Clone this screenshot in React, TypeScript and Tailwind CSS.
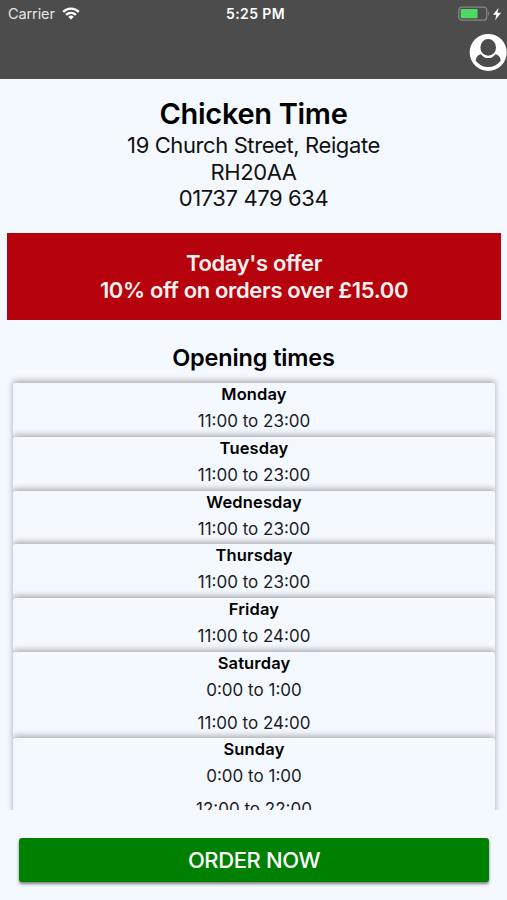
import clsx from "clsx";

type OpeningDay = {
  day: string;
  hours: string[];
};

const OPENING_TIMES: OpeningDay[] = [
  { day: "Monday", hours: ["11:00 to 23:00"] },
  { day: "Tuesday", hours: ["11:00 to 23:00"] },
  { day: "Wednesday", hours: ["11:00 to 23:00"] },
  { day: "Thursday", hours: ["11:00 to 23:00"] },
  { day: "Friday", hours: ["11:00 to 24:00"] },
  { day: "Saturday", hours: ["0:00 to 1:00", "11:00 to 24:00"] },
  { day: "Sunday", hours: ["0:00 to 1:00", "12:00 to 22:00"] },
];

function WifiIcon() {
  return (
    <svg viewBox="0 0 18 13" className="w-[18px] h-[13px]" fill="none" stroke="#fff" strokeWidth="2.4">
      <path d="M1.2 4.9a11 11 0 0 1 15.6 0" />
      <path d="M4.1 7.9a7 7 0 0 1 9.8 0" />
      <path d="M9 12.6 6.3 9.9a3.8 3.8 0 0 1 5.4 0z" fill="#fff" stroke="none" />
    </svg>
  );
}

function BatteryIcon() {
  return (
    <svg viewBox="0 0 44 16" className="w-11 h-4" fill="none">
      <rect x="0.7" y="1.2" width="28" height="13" rx="3" stroke="#858585" strokeWidth="1.3" />
      <rect x="2.6" y="3.1" width="17" height="9.2" rx="1" fill="#4cd964" />
      <path d="M30.2 5.6c1.4.5 1.4 3.7 0 4.2z" fill="#858585" />
      <path d="M40.6 1.8 35 8.8h3.3L37.2 14.2l5.8-7.4h-3.6z" fill="#fff" />
    </svg>
  );
}

function ProfileIcon() {
  return (
    <svg viewBox="0 0 38 38" className="w-[38px] h-[38px]">
      <circle cx="19.2" cy="19.4" r="18.5" fill="#fff" />
      <path d="M12 21.2c-3.4.8-5.2 3-5.3 6.6a15.6 15.6 0 0 0 25 0c-.1-3.6-1.9-5.8-5.3-6.6-2 2.6-4.2 3.9-7.2 3.9s-5.2-1.3-7.2-3.9z" fill="#4c4c4c" />
      <ellipse cx="19.2" cy="14.4" rx="7.8" ry="8.4" fill="#4c4c4c" />
    </svg>
  );
}

function Header() {
  return (
    <header className="h-[79px] shrink-0 bg-[#4c4c4c] text-white">
      <div className="grid h-[27px] grid-cols-3 items-center pl-2 pr-[5px]">
        <div className="flex items-center gap-[7px]">
          <span className="text-[14.5px] tracking-[-0.1px] text-[#e6e6e6]">Carrier</span>
          <WifiIcon />
        </div>
        <span className="pl-px text-center text-[14px] font-semibold tracking-[0.4px]">5:25 PM</span>
        <div className="flex justify-end">
          <BatteryIcon />
        </div>
      </div>
      <button type="button" aria-label="Account" className="ml-auto mt-[6px] block">
        <ProfileIcon />
      </button>
    </header>
  );
}

function DayCard({ day, hours }: OpeningDay) {
  return (
    <li className="rounded-[2px] bg-[#f4f9ff] pb-[1.7px] shadow-[0_-1.5px_6px_rgba(0,0,0,0.32)]">
      <h3 className="text-[16.5px] leading-[22.4px] font-semibold tracking-[0.15px]">{day}</h3>
      <div className="pt-[2.6px]">
        {hours.map((h, i) => (
          <p key={h} className={clsx("text-[17px] leading-[27px] text-[#1c1c1e]", i > 0 && "mt-[6px]")}>
            {h}
          </p>
        ))}
      </div>
    </li>
  );
}

export default function App() {
  return (
    <div className="flex h-[900px] w-[507px] flex-col overflow-hidden bg-[#f4f9ff] font-['Inter',sans-serif] text-center text-black">
      <Header />
      <main className="min-h-0 flex-1 overflow-hidden">
        <section className="pt-[17px]">
          <h1 className="text-[29px] leading-9 font-semibold tracking-[-0.3px]">Chicken Time</h1>
          <div className="text-[22px] leading-[26.5px] tracking-[-0.4px] text-[#111]">
            <p>19 Church Street, Reigate</p>
            <p>RH20AA</p>
            <p>01737 479 634</p>
          </div>
        </section>
        <section className="mx-[7px] mr-[6px] mt-[21.5px] flex h-[87px] flex-col justify-center bg-[#b5020c] text-[22px] leading-[26.5px] font-semibold tracking-[-0.35px] text-[#fff0f0]">
          <p>Today's offer</p>
          <p>10% off on orders over £15.00</p>
        </section>
        <section className="mt-[22.5px]">
          <h2 className="text-[23.5px] leading-[30px] font-semibold tracking-[-0.15px]">Opening times</h2>
          <ul className="ml-[13px] mr-3 mt-[10.8px]">
            {OPENING_TIMES.map((d) => (
              <DayCard key={d.day} {...d} />
            ))}
          </ul>
        </section>
      </main>
      <footer className="h-[90px] shrink-0 pl-[19px] pr-[18px] pt-7">
        <button
          type="button"
          className="h-11 w-full rounded-[3px] bg-[#008000] text-[22px] font-medium tracking-[-0.4px] text-white shadow-[0_2px_3px_rgba(0,0,0,0.5)]"
        >
          ORDER NOW
        </button>
      </footer>
    </div>
  );
}
